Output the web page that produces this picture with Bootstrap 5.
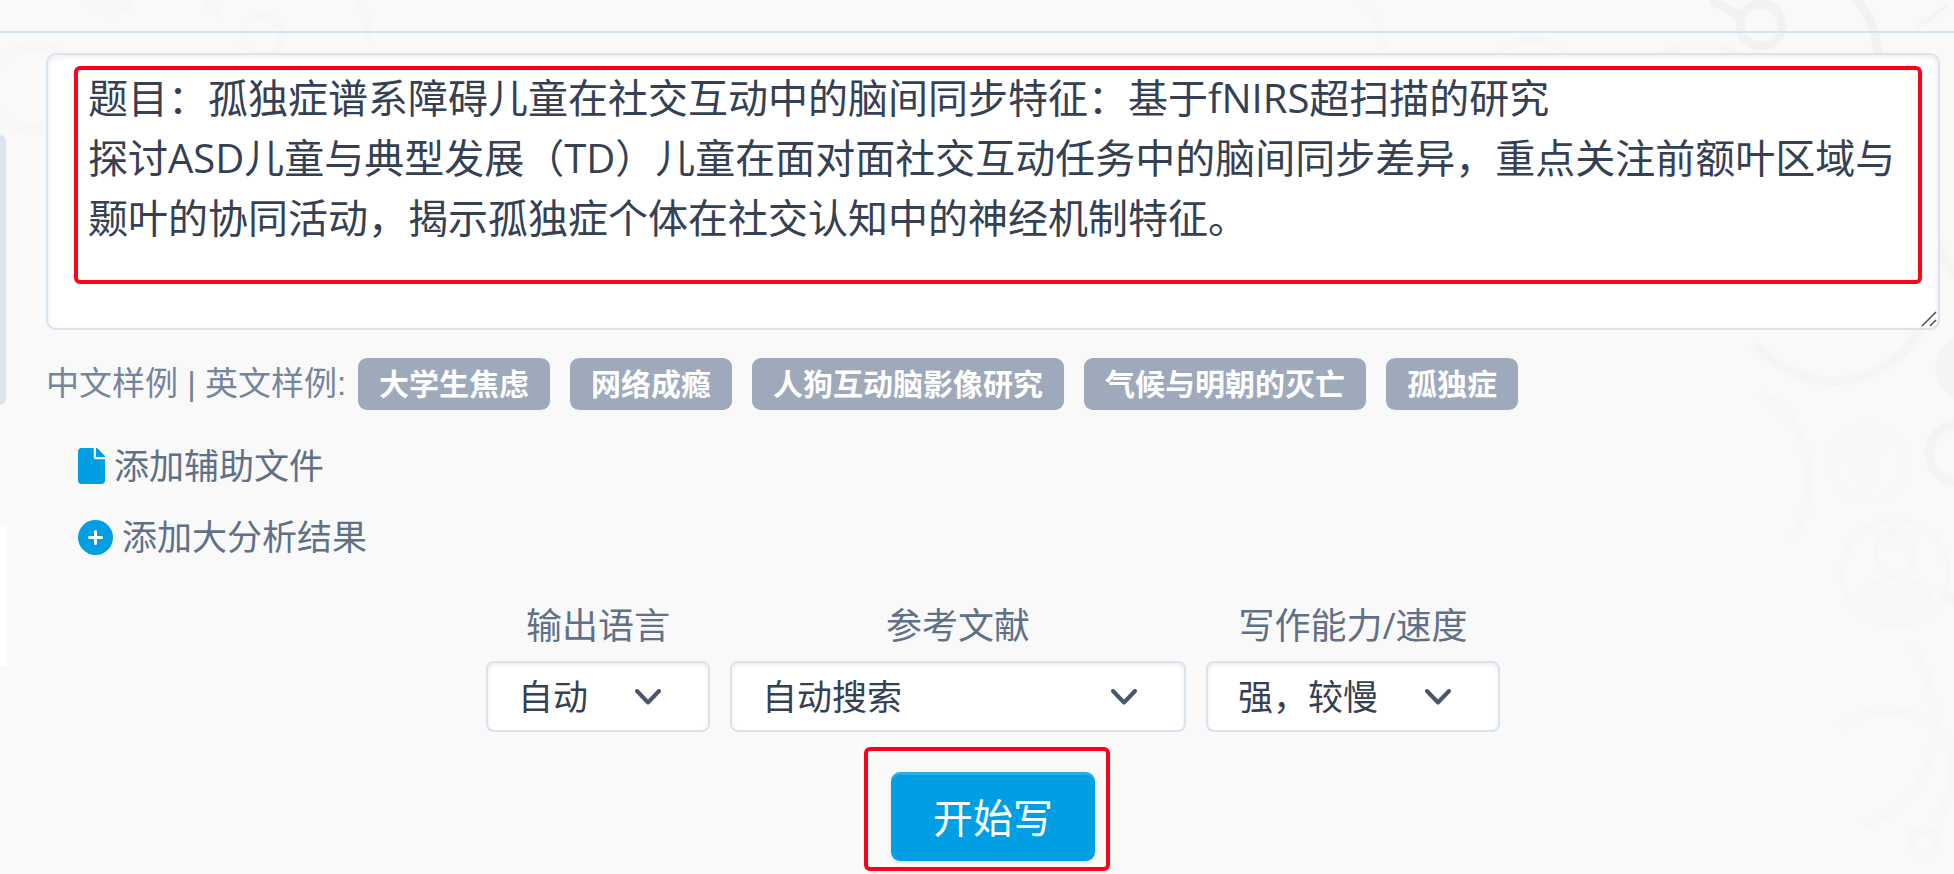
<!DOCTYPE html>
<html lang="zh-CN">
<head>
<meta charset="utf-8">
<meta name="viewport" content="width=device-width, initial-scale=1">
<title>写作助手</title>
<link href="https://cdn.jsdelivr.net/npm/bootstrap@5.3.0/dist/css/bootstrap.min.css" rel="stylesheet">
<style>
  :root { --line: #d8e3f0; --ink: #354052; --soft: #5f7087; --brand: #009fe3; --note: #ff0019; }
  body { background: #f9f9f9; color: var(--soft); font-family: "Open Sans", "Noto Sans CJK SC", sans-serif; font-size: 36px; line-height: 52px; overflow-x: hidden; }
  .page-shell { min-height: 100vh; z-index: 0; }
  .backdrop { top: 0; z-index: -1; pointer-events: none; fill: none; stroke: #f5f5f5; stroke-width: 9; }
  .top-strip { height: 33px; border-bottom: 2px solid var(--line); }
  .side-edge { width: 6px; padding-top: 102px; }
  .edge-active { height: 270px; background: #d9e4f0; border-radius: 0 8px 8px 0; }
  .edge-panel { height: 139px; margin-top: 122px; background: #fff; }
  .writer { padding: 20px 14px 11px 40px; }
  .prompt-box { display: block; height: 277px; padding: 13px 40px; border: 2px solid var(--line); border-radius: 10px; background: #fff; color: var(--ink); font-size: 40px; line-height: 60px; resize: none; overflow: hidden; box-shadow: inset 0 2px 6px rgba(0,0,0,.08); }
  .grip { right: 3px; bottom: 3px; }
  .callout { border: 4px solid var(--note); border-radius: 6px; pointer-events: none; }
  .callout-text { left: 28px; right: 18px; top: 13px; height: 218px; }
  .callout-start { left: -27px; right: -15px; top: -25px; bottom: -10px; }
  .samples { margin-top: 28px; gap: 20px; }
  .samples-label { color: #75859b; font-family: "Liberation Sans", "Noto Sans CJK SC", sans-serif; font-size: 33px; margin-right: -8px; }
  .sample-chip { border: 0; height: 52px; padding: 0 21px; background: #9ea9bc; color: #fff; font-size: 30px; line-height: 52px; font-weight: 700; border-radius: 9px; }
  .extras { margin-top: 30px; padding-left: 32px; gap: 19px; }
  .extras a { color: var(--soft); font-size: 35px; gap: 9px; }
  .options { margin-top: 37px; gap: 20px; }
  .options label { margin-bottom: 9px; }
  .option-pick { height: 71px; padding: 0 84px 0 30px; border: 2px solid var(--line); border-radius: 8px; color: var(--ink); font-size: 35px; line-height: 52px; box-shadow: inset 0 2px 5px rgba(0,0,0,.07);
    background: #fff url("data:image/svg+xml,%3Csvg xmlns='http://www.w3.org/2000/svg' viewBox='0 0 26 16'%3E%3Cpath d='M2 2 13 13.5 24 2' fill='none' stroke='%234a566a' stroke-width='4' stroke-linecap='round' stroke-linejoin='round'/%3E%3C/svg%3E") no-repeat right 47px center / 26px 16px; }
  .pick-s { width: 224px; } .pick-l { width: 456px; } .pick-m { width: 294px; }
  .start { margin-top: 40px; }
  .start-btn { height: 89px; padding: 2px 42px 0; background: var(--brand); color: #fff; border: 0; border-radius: 9px; font-size: 40px; line-height: 60px; box-shadow: inset 0 3px 0 rgba(255,255,255,.15), 0 2px 3px rgba(0,0,0,.1); }
  .start-btn:hover { background: #008fcc; color: #fff; }
</style>
</head>
<body>
<div class="page-shell position-relative d-flex flex-column">
  <svg class="backdrop position-absolute start-0" width="400" height="160" aria-hidden="true">
    <g stroke="#f7f7f7"><circle cx="34" cy="88" r="42"/><circle cx="110" cy="-10" r="22"/><circle cx="262" cy="36" r="20"/><path d="M204 0 220 14M340-20q30 20 28 60"/></g>
  </svg>
  <svg class="backdrop position-absolute end-0" width="600" height="874" aria-hidden="true">
    <circle cx="407" cy="25" r="21" stroke="#f2f2f2"/>
    <path d="M357 0 390 18M500-4q24 28 24 60" stroke="#f2f2f2"/>
    <path d="M594 4 572 22q-10 0-8 12" stroke="#f4f4f4" stroke-width="4"/>
    <circle cx="178" cy="76" r="38" stroke="#f7f7f7"/>
    <path d="M0-8q30 20 28 62M300 60q47-30 94 0" stroke="#f7f7f7"/>
    <path d="M584 240q4 26 30 45M400 345q60 55 120 27 30-14 46-42"/>
    <path d="M406 395q48 22 48 88 0 36-18 56" stroke="#f7f7f7"/>
    <circle cx="612" cy="368" r="31" fill="#f4f4f3" stroke="none"/>
    <circle cx="604" cy="453" r="29" stroke="#f4f4f4"/>
    <g stroke="#f8f8f8" stroke-width="5"><circle cx="515" cy="463" r="38"/><path d="M488 444q20-20 48-2l-22 14 6 12-8 24-10-24z" fill="#f8f8f8"/></g>
    <g stroke="#f7f7f7" stroke-width="5"><circle cx="541" cy="573" r="53"/><ellipse cx="541" cy="553" rx="19" ry="24"/></g>
    <path d="M522 543q2-15 19-15t19 15q-19 5-38 0zM503 599q10-24 26-18 12 10 24 0 18-6 26 20-38 42-76-2z" fill="#f7f7f7" stroke="none"/>
    <path d="M556 645q24 32 24 82 0 72-70 97M486 728q44-34 90-4 45 36 8 94" stroke="#f7f7f7"/>
    <circle cx="570" cy="842" r="12" stroke="#f7f7f7"/>
    <path d="M590 596l14 6"/>
  </svg>
  <header class="top-strip"></header>
  <div class="d-flex flex-grow-1">
    <aside class="side-edge flex-shrink-0" aria-hidden="true">
      <div class="edge-active"></div>
      <div class="edge-panel"></div>
    </aside>
    <main class="writer flex-grow-1">
      <form>
        <div class="position-relative">
          <textarea class="prompt-box w-100" aria-label="题目与要求">题目：孤独症谱系障碍儿童在社交互动中的脑间同步特征：基于fNIRS超扫描的研究
探讨ASD儿童与典型发展（TD）儿童在面对面社交互动任务中的脑间同步差异，重点关注前额叶区域与颞叶的协同活动，揭示孤独症个体在社交认知中的神经机制特征。</textarea>
          <div class="callout callout-text position-absolute"></div>
          <svg class="grip position-absolute" width="16" height="16" fill="none" stroke="#555" stroke-width="1.6" aria-hidden="true"><path d="M1 15 15 1M9 15l6-6"/></svg>
        </div>
        <div class="samples d-flex flex-wrap align-items-center">
          <span class="samples-label">中文样例 | 英文样例:</span>
          <button type="button" class="sample-chip">大学生焦虑</button>
          <button type="button" class="sample-chip">网络成瘾</button>
          <button type="button" class="sample-chip">人狗互动脑影像研究</button>
          <button type="button" class="sample-chip">气候与明朝的灭亡</button>
          <button type="button" class="sample-chip">孤独症</button>
        </div>
        <div class="extras d-flex flex-column align-items-start">
          <a href="#" class="d-flex align-items-center text-decoration-none">
            <svg width="27" height="36" viewBox="0 0 384 512" fill="#009fe3" aria-hidden="true"><path d="M224 136V0H48C22 0 0 22 0 48v416c0 26 22 48 48 48h288c26 0 48-22 48-48V160H248c-13 0-24-11-24-24zm160-14v6H256V0h6c7 0 13 3 17 7l98 98c4 4 7 10 7 17z"/></svg>
            <span>添加辅助文件</span>
          </a>
          <a href="#" class="d-flex align-items-center text-decoration-none">
            <svg width="35" height="35" viewBox="0 0 35 35" aria-hidden="true"><circle cx="17.5" cy="17.5" r="17.5" fill="#009fe3"/><path d="M17.5 11.5v12M11.5 17.5h12" stroke="#fff" stroke-width="3" stroke-linecap="round"/></svg>
            <span>添加大分析结果</span>
          </a>
        </div>
        <div class="options d-flex flex-wrap justify-content-center">
          <div class="d-flex flex-column align-items-center">
            <label for="lang">输出语言</label>
            <select id="lang" class="form-select option-pick pick-s"><option>自动</option></select>
          </div>
          <div class="d-flex flex-column align-items-center">
            <label for="refs">参考文献</label>
            <select id="refs" class="form-select option-pick pick-l"><option>自动搜索</option></select>
          </div>
          <div class="d-flex flex-column align-items-center">
            <label for="power">写作能力/速度</label>
            <select id="power" class="form-select option-pick pick-m"><option>强，较慢</option></select>
          </div>
        </div>
        <div class="start d-flex justify-content-center">
          <div class="position-relative">
            <button type="submit" class="btn start-btn">开始写</button>
            <div class="callout callout-start position-absolute"></div>
          </div>
        </div>
      </form>
    </main>
  </div>
</div>
<script src="https://cdn.jsdelivr.net/npm/bootstrap@5.3.0/dist/js/bootstrap.bundle.min.js"></script>
</body>
</html>
